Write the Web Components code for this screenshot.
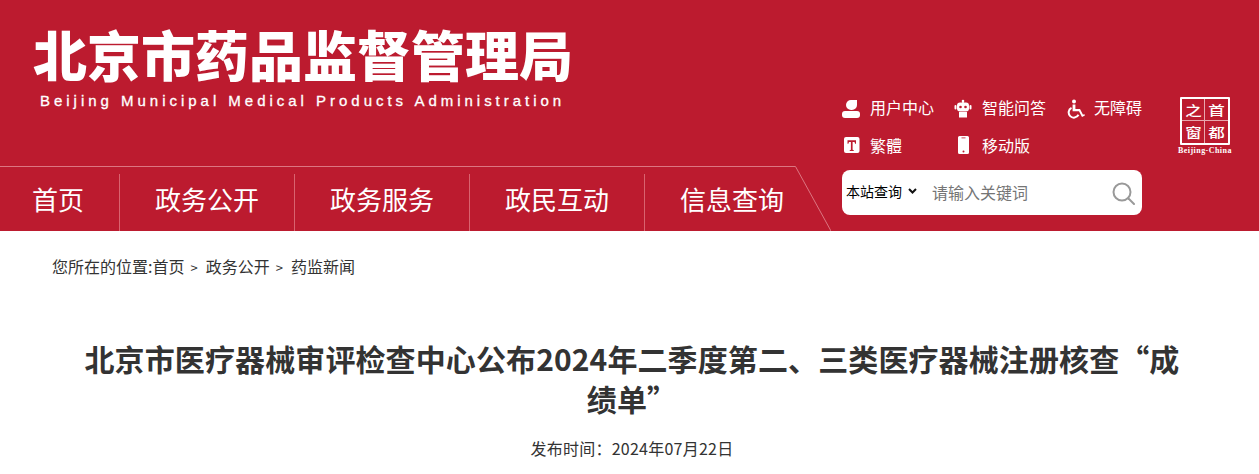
<!doctype html>
<html lang="zh-CN">
<head>
<meta charset="UTF-8" />
<title>北京市药品监督管理局</title>
<style>
  html, body { margin: 0; padding: 0; background: #fff; overflow: hidden; }
  body { font-family: "Noto Sans CJK SC", "Liberation Sans", sans-serif; color: #333; }
</style>
</head>
<body>

<site-header>
  <site-logo slot="logo"></site-logo>
  <site-nav slot="nav">
    <a>首页</a><a>政务公开</a><a>政务服务</a><a>政民互动</a><a>信息查询</a>
  </site-nav>
  <tool-link slot="tools" icon="user">用户中心</tool-link>
  <tool-link slot="tools" icon="robot">智能问答</tool-link>
  <tool-link slot="tools" icon="wheel">无障碍</tool-link>
  <tool-link slot="tools" icon="trad">繁體</tool-link>
  <tool-link slot="tools" icon="phone">移动版</tool-link>
  <search-box slot="search"></search-box>
  <capital-mark slot="mark"></capital-mark>
</site-header>

<bread-crumb>
  <span>您所在的位置:首页</span><span>政务公开</span><span>药监新闻</span>
</bread-crumb>

<article-head date="发布时间：2024年07月22日">北京市医疗器械审评检查中心公布2024年二季度第二、三类医疗器械注册核查“成绩单”</article-head>

<script>
  const red = '#bc1b2f';
  const icons = {
    user: '<rect x="0" y="13" width="18" height="7" rx="3"/><path d="M9.500 2H15v5a5 5 0 0 1-5 5H9a5 5 0 0 1-5-5 5 5 0 0 1 5.500-5z"/>',
    robot: `<rect x="8.200" y="2.500" width="1.600" height="2.500"/><circle cx="9" cy="3" r="1.300"/><rect x="3" y="4.500" width="12" height="9" rx="3"/><rect x=".5" y="7" width="2" height="4.500" rx="1"/><rect x="15.500" y="7" width="2" height="4.500" rx="1"/><path d="M5 14h8v5.500H5z"/><circle cx="6.500" cy="9" r="1.300" fill="${red}"/><circle cx="11.500" cy="9" r="1.300" fill="${red}"/>`,
    wheel: '<circle cx="8" cy="3.500" r="2"/><path d="M6.600 6.500h2.800v4.500h4.600l3 5.700 1.300-.6.6 1.500-2.900 1.300-3-5.600H6.600z"/><path d="M5.500 9.800a5.200 5.200 0 1 0 7 7" fill="none" stroke="#fff" stroke-width="2"/>',
    trad: `<rect x="2" y="1" width="15.500" height="16" rx="2"/><path fill="${red}" d="M5.500 4.300h8.500v3.400h-.9l-.6-1.700h-1.900v7.700l1.200.5v.8H7.700v-.8l1.200-.5V6H7l-.6 1.700h-.9z"/>`,
    phone: `<path d="M5.500 0h8A1.500 1.500 0 0 1 15 1.500v15a1.500 1.500 0 0 1-1.500 1.500h-8A1.500 1.500 0 0 1 4 16.500v-15A1.500 1.500 0 0 1 5.500 0z"/><rect x="7.500" y="1.500" width="4" height=".8" fill="${red}"/><circle cx="9.500" cy="15.500" r="1" fill="${red}"/>`
  };

  class SiteHeader extends HTMLElement {
    constructor() {
      super();
      this.attachShadow({ mode: 'open' });
      this.shadowRoot.innerHTML = `
        <style>
          :host { display: flex; height: 231px; background: #bc1b2f; color: #fff; overflow: hidden; }
          .left { width: 831px; flex: none; display: flex; flex-direction: column; }
          .top { height: 166px; flex: none; }
          .right { flex: none; width: 311px; margin-left: 11px; padding-top: 88px; box-sizing: border-box; }
          .tools { display: grid; grid-template-columns: repeat(3, 112px); grid-auto-rows: 38px; margin-right: -36px; }
          .search { margin-top: 6px; }
          .mark { margin: 97px 0 0 25px; }
        </style>
        <div class="left">
          <div class="top"><slot name="logo"></slot></div>
          <slot name="nav"></slot>
        </div>
        <div class="right">
          <div class="tools"><slot name="tools"></slot></div>
          <div class="search"><slot name="search"></slot></div>
        </div>
        <div class="mark"><slot name="mark"></slot></div>
      `;
    }
  }

  class SiteLogo extends HTMLElement {
    constructor() {
      super();
      this.attachShadow({ mode: 'open' });
      this.shadowRoot.innerHTML = `
        <style>
          :host { display: block; padding: 22px 0 0 33px; color: #fff; }
          h1 { margin: 0; font: 900 54px/64px "Noto Sans CJK SC", sans-serif; white-space: nowrap; }
          p { margin: 6px 0 0 7px; font: 400 15px/17px "Liberation Sans", sans-serif; letter-spacing: 3.98px; -webkit-text-stroke: .3px #fff; white-space: nowrap; }
        </style>
        <h1>北京市药品监督管理局</h1>
        <p>Beijing Municipal Medical Products Administration</p>
      `;
    }
  }

  class SiteNav extends HTMLElement {
    constructor() {
      super();
      this.attachShadow({ mode: 'open' });
      this.shadowRoot.innerHTML = `
        <style>
          :host { display: flex; position: relative; height: 65px; box-sizing: border-box; padding-top: 8px; font: 400 26px/1 "Noto Sans CJK SC", sans-serif; color: #fff; }
          ::slotted(a) { display: flex; align-items: center; padding: 0 35px 7px; height: 57px; border-left: 1px solid #d9636f; box-sizing: border-box; }
          ::slotted(a:first-child) { border-left: 0; padding-left: 32px; }
          svg { position: absolute; left: 0; top: 0; }
        </style>
        <svg width="831" height="65" viewBox="0 0 831 65"><path d="M0 .5H795.500L831 65" fill="none" stroke="#dc7681"/></svg>
        <slot></slot>
      `;
    }
  }

  class ToolLink extends HTMLElement {
    constructor() {
      super();
      this.attachShadow({ mode: 'open' });
      const icon = icons[this.getAttribute('icon')] || '';
      this.shadowRoot.innerHTML = `
        <style>
          :host { display: flex; align-items: center; gap: 8px; height: 38px; font: 400 16px/38px "Noto Sans CJK SC", sans-serif; color: #fff; white-space: nowrap; }
          svg { width: 20px; height: 21px; flex: none; fill: #fff; margin-top: 2px; }
        </style>
        <svg viewBox="0 0 20 21">${icon}</svg><slot></slot>
      `;
    }
  }

  class SearchBox extends HTMLElement {
    constructor() {
      super();
      this.attachShadow({ mode: 'open' });
      this.shadowRoot.innerHTML = `
        <style>
          :host { display: flex; align-items: center; width: 300px; height: 45px; background: #fff; border-radius: 8px; box-sizing: border-box; padding-left: 4px; }
          select { appearance: none; width: 56px; height: 24px; margin-bottom: 3px; border: 0; background: #fff; color: #000; font: 400 14px "Noto Sans CJK SC", sans-serif; outline: 0; padding: 0; }
          .arrow { width: 9px; height: 6px; flex: none; margin: 0 0 3px 6px; }
          input { flex: 1; min-width: 0; border: 0; outline: 0; margin: 0 0 1px 15px; font: 400 16px "Noto Sans CJK SC", sans-serif; background: transparent; padding: 0; }
          input::placeholder { color: #757575; }
          .glass { width: 24px; height: 24px; flex: none; margin-right: 7px; }
        </style>
        <select><option>本站查询</option></select>
        <svg class="arrow" viewBox="0 0 9 6" fill="none" stroke="#111" stroke-width="2"><path d="M1 1l3.500 3.500L8 1"/></svg>
        <input placeholder="请输入关键词" />
        <svg class="glass" viewBox="0 0 24 24" fill="none" stroke="#999" stroke-width="2"><circle cx="11" cy="11" r="8.500"/><path d="M17.500 17.500L23 23" stroke-linecap="round"/></svg>
      `;
    }
  }

  class CapitalMark extends HTMLElement {
    constructor() {
      super();
      this.attachShadow({ mode: 'open' });
      this.shadowRoot.innerHTML = `
        <style>
          :host { display: block; width: 54px; color: #fff; }
          .box { display: grid; grid-template-columns: 1fr 1fr; grid-template-rows: 1fr 1fr; width: 50px; height: 48px; margin-left: 2px; box-sizing: border-box; border: 2px solid #fff; border-radius: 1px; position: relative; font: 500 15px/22px "Noto Sans CJK SC", serif; text-align: center; }
          .box span { display: block; transform: scale(1.1, .85); line-height: 22px; }
          .box i { position: absolute; background: #e8a6ad; }
          .v { left: 22px; top: 0; bottom: 0; width: 1px; }
          .h { top: 21px; left: 0; right: 0; height: 1px; }
          p { margin: 1px 0 0; font: 700 8px/10px "Liberation Serif", serif; letter-spacing: .45px; white-space: nowrap; }
        </style>
        <div class="box"><span>之</span><span>首</span><span>窗</span><span>都</span><i class="v"></i><i class="h"></i></div>
        <p>Beijing-China</p>
      `;
    }
  }

  class BreadCrumb extends HTMLElement {
    constructor() {
      super();
      this.attachShadow({ mode: 'open' });
      this.shadowRoot.innerHTML = `
        <style>
          :host { display: flex; padding: 23px 0 0 52px; height: 72px; box-sizing: border-box; font: 400 16px/24px "Noto Sans CJK SC", sans-serif; color: #333; }
          ::slotted(span:not(:first-child))::before { content: ">"; font-size: 13px; margin: 0 8px 0 6px; }
        </style>
        <slot></slot>
      `;
    }
  }

  class ArticleHead extends HTMLElement {
    constructor() {
      super();
      this.attachShadow({ mode: 'open' });
      const date = this.getAttribute('date');
      this.shadowRoot.innerHTML = `
        <style>
          :host { display: block; padding: 35px 67px 0 72px; text-align: center; color: #333; }
          h2 { margin: 0; font: 700 30px/40px "Noto Sans CJK SC", sans-serif; letter-spacing: .11px; }
          p { margin: 18px 0 0; font: 400 16px/24px "Noto Sans CJK SC", sans-serif; letter-spacing: .24px; }
        </style>
        <h2><slot></slot></h2>
        <p>${date}</p>
      `;
    }
  }

  customElements.define('site-header', SiteHeader);
  customElements.define('site-logo', SiteLogo);
  customElements.define('site-nav', SiteNav);
  customElements.define('tool-link', ToolLink);
  customElements.define('search-box', SearchBox);
  customElements.define('capital-mark', CapitalMark);
  customElements.define('bread-crumb', BreadCrumb);
  customElements.define('article-head', ArticleHead);
</script>
</body>
</html>
